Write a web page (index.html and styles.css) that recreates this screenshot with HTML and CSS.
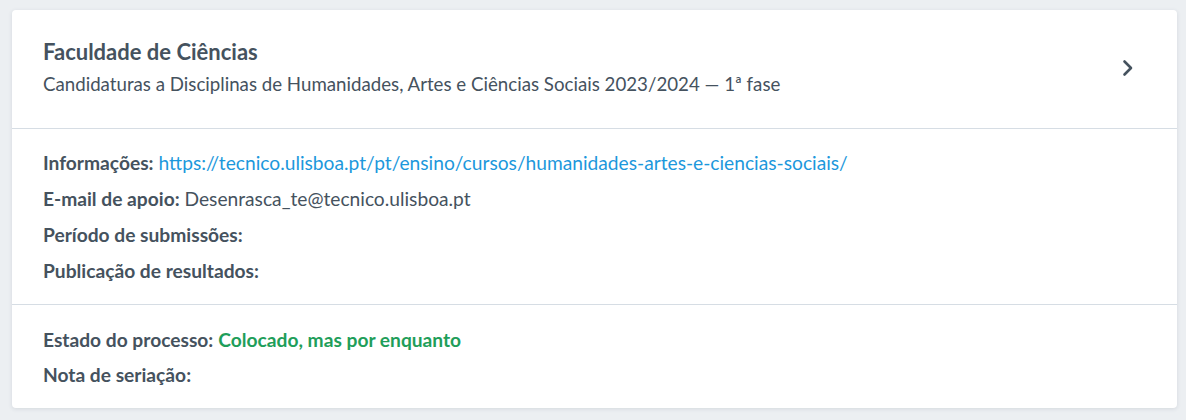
FILE: index.html
```html
<!DOCTYPE html>
<html lang="pt">
<head>
<meta charset="utf-8">
<link rel="stylesheet" href="styles.css">
</head>
<body>
<div class="card">
  <div class="card-header">
    <div class="titles">
      <div class="title">Faculdade de Ciências</div>
      <div class="subtitle">Candidaturas a Disciplinas de Humanidades, Artes e Ciências Sociais 2023/2024 — 1ª fase</div>
    </div>
    <svg class="chevron" width="14" height="20" viewBox="0 0 14 20"><path d="M3.5 3.5 L10 10 L3.5 16.5" fill="none" stroke="#45525e" stroke-width="2.6" stroke-linecap="round" stroke-linejoin="round"/></svg>
  </div>
  <div class="section">
    <div class="row"><span class="label">Informações:</span> <a class="link" href="#">https://tecnico.ulisboa.pt/pt/ensino/cursos/humanidades-artes-e-ciencias-sociais/</a></div>
    <div class="row"><span class="label">E-mail de apoio:</span> Desenrasca_te@tecnico.ulisboa.pt</div>
    <div class="row"><span class="label">Período de submissões:</span></div>
    <div class="row"><span class="label">Publicação de resultados:</span></div>
  </div>
  <div class="section status">
    <div class="row"><span class="label">Estado do processo:</span> <span class="ok">Colocado, mas por enquanto</span></div>
    <div class="row"><span class="label">Nota de seriação:</span></div>
  </div>
</div>
</body>
</html>
```
FILE: styles.css
```css
html, body { margin: 0; padding: 0; }
body {
  background: #eceff2;
  font-family: "Lato", "Liberation Sans", sans-serif;
  color: #45525e;
  padding: 10px 9px 11px 12px;
}
.card {
  background: #fff;
  border-radius: 4px;
  box-shadow: 0 1px 4px rgba(40, 60, 80, 0.12);
}
.card-header {
  display: flex;
  align-items: center;
  justify-content: space-between;
  padding: 28px 42px 30px 31px;
  border-bottom: 1px solid #d6dde4;
}
.title {
  font-size: 22px;
  font-weight: 700;
  line-height: 28px;
  margin-bottom: 4px;
}
.subtitle {
  font-size: 18.7px;
  line-height: 28px;
}
.chevron { display: block; }
.section {
  padding: 16px 31px 15px;
  border-bottom: 1px solid #d6dde4;
}
.section.status {
  border-bottom: none;
  padding: 17px 31px 16px;
}
.row {
  font-size: 19.2px;
  line-height: 36px;
}
.status .row { line-height: 35px; }
.label { font-weight: 700; }
.link { color: #1c98dc; text-decoration: none; }
.ok { color: #1f9e5a; font-weight: 700; }
```
